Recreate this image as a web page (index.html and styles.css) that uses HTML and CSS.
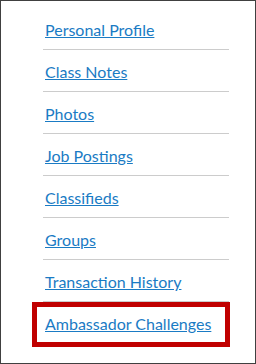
FILE: index.html
```html
<!DOCTYPE html>
<html lang="en">
<head>
    <meta charset="UTF-8">
    <meta name="viewport" content="width=device-width, initial-scale=1.0">
    <title>Account Menu</title>
    <link rel="stylesheet" href="styles.css">
</head>
<body>
    <div class="frame">
        <ul class="menu">
            <li class="menu-item"><a href="#">Personal Profile</a></li>
            <li class="menu-item"><a href="#">Class Notes</a></li>
            <li class="menu-item"><a href="#">Photos</a></li>
            <li class="menu-item"><a href="#">Job Postings</a></li>
            <li class="menu-item"><a href="#">Classifieds</a></li>
            <li class="menu-item"><a href="#">Groups</a></li>
            <li class="menu-item"><a href="#">Transaction History</a></li>
            <li class="menu-item highlight"><a href="#">Ambassador Challenges</a></li>
        </ul>
    </div>
</body>
</html>
```

FILE: styles.css
```css
:root {
    --link-color: #1a7bc4;
    --rule-color: #cccccc;
    --frame-color: #404040;
    --mark-color: #c00000;
}

body {
    margin: 0;
    font-family: Lato, 'Open Sans', sans-serif;
    background: #fff;
}

.frame {
    width: 256px;
    height: 364px;
    box-sizing: border-box;
    border: 1px solid var(--frame-color);
    padding: 7px 0 0 42px;
}

.menu {
    list-style: none;
    margin: 0;
    padding: 0;
    width: 186px;
}

.menu-item {
    height: 41px;
    box-sizing: content-box;
    border-bottom: 1px solid var(--rule-color);
    padding: 0 0 0 2px;
    font-size: 16px;
    line-height: 19px;
    position: relative;
}

.menu-item a {
    display: inline-block;
    margin-top: 12px;
    color: var(--link-color);
    text-decoration: underline;
}

.menu-item.highlight {
    border-bottom: none;
}

.highlight::after {
    content: '';
    position: absolute;
    left: -11px;
    right: -1px;
    top: 0;
    height: 45px;
    box-sizing: border-box;
    border: 5px solid var(--mark-color);
}
```
